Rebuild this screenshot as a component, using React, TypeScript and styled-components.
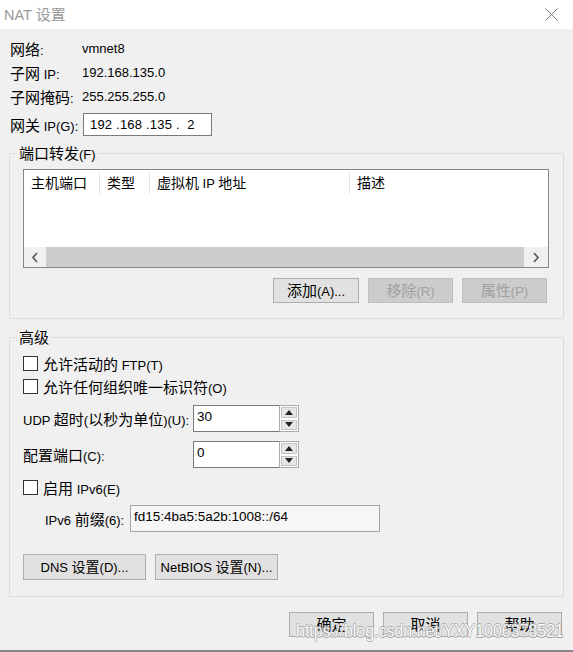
import React from 'react';
import styled, { createGlobalStyle } from 'styled-components';

const GlobalStyle = createGlobalStyle`
  html, body {
    margin: 0;
    padding: 0;
    background: #f0f0f0;
  }
  body {
    font-family: "Liberation Sans", "Noto Sans CJK SC", sans-serif;
    font-size: 13px;
    color: #000;
  }
  * {
    box-sizing: border-box;
  }
`;

// Chinese runs are drawn a bit larger than the Latin ones, like the Windows UI font
const Han = styled.span<{ $size?: number }>`
  font-family: "Noto Sans CJK SC", sans-serif;
  font-size: ${(p) => p.$size ?? 15}px;
`;

const cjk = /([\u3000-\u9fff]+)/;
const mix = (text: string, size?: number) =>
  text.split(cjk).map((part, i) =>
    i % 2 ? (
      <Han key={i} $size={size}>
        {part}
      </Han>
    ) : (
      part
    )
  );

const Window = styled.div`
  position: relative;
  width: 573px;
  height: 652px;
  display: flex;
  flex-direction: column;
  background: #f0f0f0;
  border-bottom: 2px solid #878787;
  overflow: hidden;
`;

const TitleBar = styled.div`
  height: 29px;
  flex: none;
  display: flex;
  align-items: center;
  padding: 0 15px 3px 4px;
  background: #fff;
  color: #9a9a9a;
  font-size: 14.5px;
`;

const Close = styled.svg`
  margin-left: auto;
  margin-top: 3px;
`;

const Body = styled.div`
  padding: 8px 9px 0 9px;
`;

const InfoRow = styled.div`
  display: flex;
  height: 24px;
  line-height: 24px;
  padding-left: 1px;
`;

const InfoLabel = styled.div<{ $w: number }>`
  width: ${(p) => p.$w}px;
  flex: none;
`;

const GatewayRow = styled(InfoRow)`
  margin-top: 4px;
  height: 23px;
  line-height: 23px;
`;

const IpBox = styled.div`
  width: 129px;
  height: 23px;
  border: 1px solid #7a7a7a;
  background: #fff;
  padding-left: 6px;
  line-height: 21px;
  letter-spacing: 0.2px;
  white-space: pre;
`;

const Group = styled.fieldset<{ $gap: number; $pad: string }>`
  margin: ${(p) => p.$gap}px 0 0 0;
  width: 555px;
  min-width: 0;
  border: 1px solid #dcdcdc;
  padding: ${(p) => p.$pad};
`;

const Legend = styled.legend`
  padding: 0 2px;
  margin-left: -6px;
  line-height: 20px;
  height: 20px;
`;

const ListBox = styled.div`
  height: 99px;
  border: 1px solid #828790;
  background: #fff;
  display: flex;
  flex-direction: column;
`;

const HeaderRow = styled.div`
  display: flex;
  height: 24px;
  padding-top: 2px;
`;

const HeaderCell = styled.div<{ $w?: number; $last?: boolean }>`
  width: ${(p) => (p.$w ? `${p.$w}px` : 'auto')};
  flex: ${(p) => (p.$w ? 'none' : '1')};
  height: 22px;
  line-height: 21px;
  padding-left: 7px;
  border-right: ${(p) => (p.$last ? 'none' : '1px solid #e5e5e5')};
`;

const ListSpacer = styled.div`
  flex: 1;
`;

const HScroll = styled.div`
  height: 20px;
  display: flex;
  background: #f0f0f0;
`;

const ScrollArrow = styled.div<{ $w: number }>`
  width: ${(p) => p.$w}px;
  display: flex;
  align-items: center;
  justify-content: center;
`;

const ScrollThumb = styled.div`
  flex: 1;
  background: #cdcdcd;
`;

const ButtonRow = styled.div<{ $gap: number; $top: number }>`
  display: flex;
  gap: ${(p) => p.$gap}px;
  margin-top: ${(p) => p.$top}px;
`;

const RightButtons = styled(ButtonRow)`
  justify-content: flex-end;
  padding-right: 2px;
`;

const Button = styled.button<{ $w: number; $h?: number }>`
  width: ${(p) => p.$w}px;
  height: ${(p) => p.$h ?? 25}px;
  padding: 0;
  border: 1px solid #adadad;
  background: #e1e1e1;
  color: #000;
  font-family: inherit;
  font-size: 13px;
  line-height: 22px;

  &:disabled {
    background: #cccccc;
    border-color: #bfbfbf;
    color: #a0a0a0;
  }
`;

const CheckRow = styled.div<{ $top?: number }>`
  display: flex;
  align-items: center;
  height: 23px;
  margin-top: ${(p) => p.$top ?? 0}px;
`;

const CheckBox = styled.span`
  width: 15px;
  height: 15px;
  margin-right: 5px;
  border: 1px solid #333;
  background: #fff;
  flex: none;
`;

const FieldRow = styled.div<{ $top: number; $indent?: number }>`
  display: flex;
  align-items: center;
  height: 27px;
  margin-top: ${(p) => p.$top}px;
  padding-left: ${(p) => p.$indent ?? 0}px;
`;

const FieldLabel = styled.div<{ $w: number }>`
  width: ${(p) => p.$w}px;
  flex: none;
`;

const Spin = styled.div`
  display: flex;
  height: 27px;
`;

const SpinInput = styled.div`
  width: 86px;
  height: 27px;
  border: 1px solid #7a7a7a;
  border-right: none;
  background: #fff;
  padding: 1px 0 0 3px;
  line-height: 20px;
  font-size: 13.5px;
`;

const SpinButtons = styled.div`
  width: 20px;
  height: 27px;
  border: 1px solid #a9a9a9;
  display: flex;
  flex-direction: column;
  background: #fff;
`;

const SpinHalf = styled.div`
  flex: 1;
  margin: 1px;
  background: #e6e6e6;
  border: 1px solid #c4c4c4;
  display: flex;
  align-items: center;
  justify-content: center;
`;

const Triangle = styled.span<{ $up?: boolean }>`
  width: 0;
  height: 0;
  border-left: 4px solid transparent;
  border-right: 4px solid transparent;
  ${(p) => (p.$up ? 'border-bottom: 5px solid #222;' : 'border-top: 5px solid #222;')}
`;

const PrefixBox = styled.div`
  width: 250px;
  height: 27px;
  border: 1px solid #a5a5a5;
  background: #f6f6f6;
  padding: 1px 0 0 3px;
  line-height: 20px;
  font-size: 13.5px;
`;

const Footer = styled.div`
  flex: 1;
  display: flex;
  justify-content: flex-end;
  align-items: flex-start;
  gap: 9px;
  padding: 15px 11px 0 0;
`;

const Watermark = styled.div`
  position: absolute;
  left: 296px;
  top: 621px;
  font-family: "Liberation Sans", sans-serif;
  font-size: 19px;
  line-height: 19px;
  white-space: nowrap;
  color: #fff;
  opacity: 0.85;
  transform: scaleX(0.84);
  transform-origin: left top;
  text-shadow: 0.6px 0 #9c9c9c, -0.6px 0 #9c9c9c, 0 0.6px #9c9c9c, 0 -0.6px #9c9c9c;
  pointer-events: none;
`;

const Chevron = ({ dir }: { dir: 'left' | 'right' }) => (
  <svg width="8" height="11" viewBox="0 0 8 11">
    <path
      d={dir === 'left' ? 'M6 1 L2 5.5 L6 10' : 'M2 1 L6 5.5 L2 10'}
      fill="none"
      stroke="#606060"
      strokeWidth="1.8"
    />
  </svg>
);

const SpinBox = ({ value }: { value: string }) => (
  <Spin>
    <SpinInput>{value}</SpinInput>
    <SpinButtons>
      <SpinHalf>
        <Triangle $up />
      </SpinHalf>
      <SpinHalf>
        <Triangle />
      </SpinHalf>
    </SpinButtons>
  </Spin>
);

const info = [
  { label: '网络:', value: 'vmnet8' },
  { label: '子网 IP:', value: '192.168.135.0' },
  { label: '子网掩码:', value: '255.255.255.0' },
];

const columns = [
  { title: '主机端口', w: 76 },
  { title: '类型', w: 50 },
  { title: '虚拟机 IP 地址', w: 200 },
  { title: '描述' },
];

const App = () => {
  return (
    <>
      <GlobalStyle />
      <Window>
        <TitleBar>
          <span>{mix('NAT 设置')}</span>
          <Close width="13" height="13" viewBox="0 0 13 13">
            <path d="M0.5 0.5 L12.5 12.5 M12.5 0.5 L0.5 12.5" stroke="#777" strokeWidth="1" />
          </Close>
        </TitleBar>

        <Body>
          {info.map((row) => (
            <InfoRow key={row.label}>
              <InfoLabel $w={72}>{mix(row.label)}</InfoLabel>
              <span>{row.value}</span>
            </InfoRow>
          ))}
          <GatewayRow>
            <InfoLabel $w={73}>{mix('网关 IP(G):')}</InfoLabel>
            <IpBox>{'192 .168 .135 .  2'}</IpBox>
          </GatewayRow>

          <Group $gap={7} $pad="6px 14px 15px 13px">
            <Legend>{mix('端口转发(F)')}</Legend>
            <ListBox>
              <HeaderRow>
                {columns.map((c, i) => (
                  <HeaderCell key={c.title} $w={c.w} $last={i === columns.length - 1}>
                    {mix(c.title, 14)}
                  </HeaderCell>
                ))}
              </HeaderRow>
              <ListSpacer />
              <HScroll>
                <ScrollArrow $w={22}>
                  <Chevron dir="left" />
                </ScrollArrow>
                <ScrollThumb />
                <ScrollArrow $w={24}>
                  <Chevron dir="right" />
                </ScrollArrow>
              </HScroll>
            </ListBox>
            <RightButtons $gap={9} $top={10}>
              <Button $w={86}>{mix('添加(A)...')}</Button>
              <Button $w={85} disabled>
                {mix('移除(R)')}
              </Button>
              <Button $w={85} disabled>
                {mix('属性(P)')}
              </Button>
            </RightButtons>
          </Group>

          <Group $gap={8} $pad="5px 14px 16px 13px">
            <Legend>{mix('高级')}</Legend>
            <CheckRow>
              <CheckBox />
              <span>{mix('允许活动的 FTP(T)')}</span>
            </CheckRow>
            <CheckRow>
              <CheckBox />
              <span>{mix('允许任何组织唯一标识符(O)')}</span>
            </CheckRow>
            <FieldRow $top={7}>
              <FieldLabel $w={170}>{mix('UDP 超时(以秒为单位)(U):')}</FieldLabel>
              <SpinBox value="30" />
            </FieldRow>
            <FieldRow $top={9}>
              <FieldLabel $w={170}>{mix('配置端口(C):')}</FieldLabel>
              <SpinBox value="0" />
            </FieldRow>
            <CheckRow $top={8}>
              <CheckBox />
              <span>{mix('启用 IPv6(E)')}</span>
            </CheckRow>
            <FieldRow $top={6} $indent={22}>
              <FieldLabel $w={85}>{mix('IPv6 前缀(6):')}</FieldLabel>
              <PrefixBox>fd15:4ba5:5a2b:1008::/64</PrefixBox>
            </FieldRow>
            <ButtonRow $gap={9} $top={22}>
              <Button $w={123} $h={26}>
                {mix('DNS 设置(D)...', 14)}
              </Button>
              <Button $w={123} $h={26}>
                {mix('NetBIOS 设置(N)...', 14)}
              </Button>
            </ButtonRow>
          </Group>
        </Body>

        <Footer>
          <Button $w={85}>{mix('确定')}</Button>
          <Button $w={85}>{mix('取消')}</Button>
          <Button $w={85}>{mix('帮助')}</Button>
        </Footer>
        <Watermark>https://blog.csdn.net/YXY1006378521</Watermark>
      </Window>
    </>
  );
};

export default App;
